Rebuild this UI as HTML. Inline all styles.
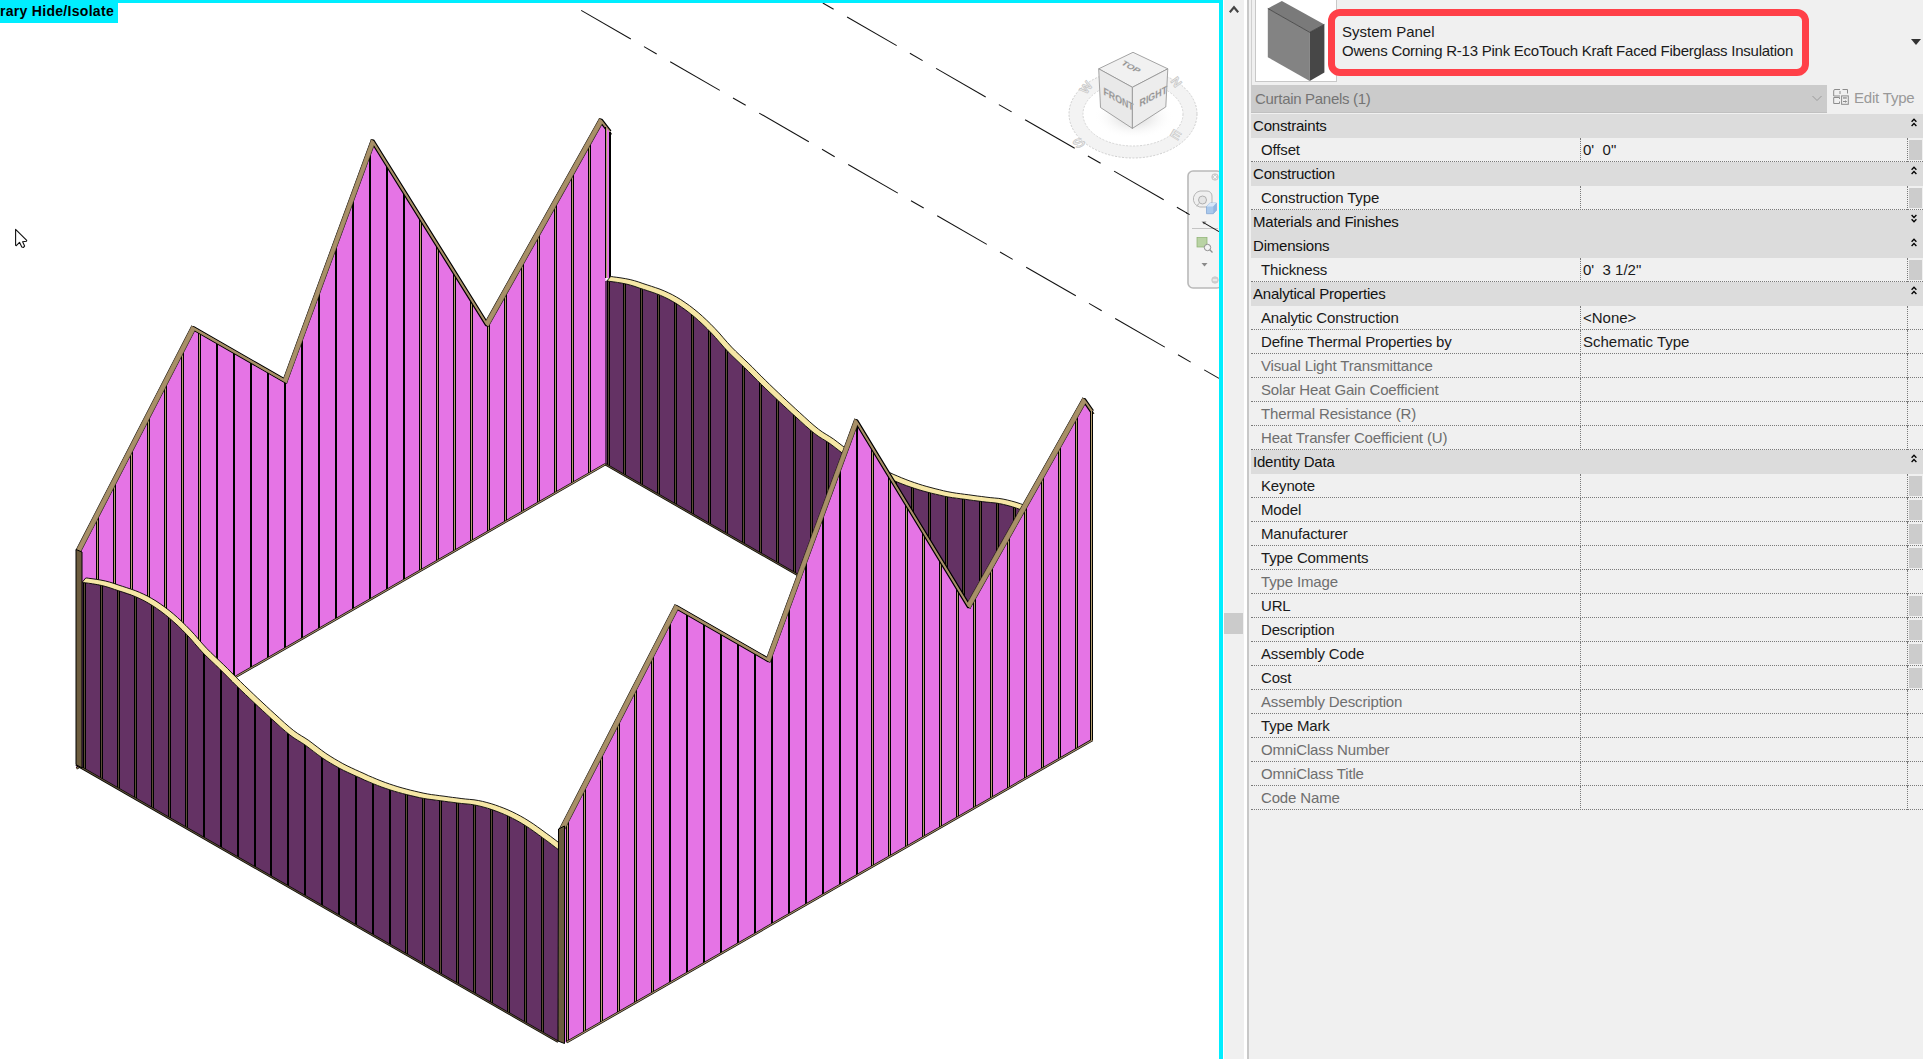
<!DOCTYPE html>
<html><head><meta charset="utf-8">
<style>
*{margin:0;padding:0;box-sizing:border-box}
html,body{width:1923px;height:1059px;overflow:hidden;background:#fff}
body{position:relative;font-family:"Liberation Sans",sans-serif}
#view{position:absolute;left:0;top:0;width:1923px;height:1059px}
#lbl{position:absolute;left:0;top:0;width:118px;height:23px;background:#00EEFF;font-weight:bold;font-size:14px;color:#000;line-height:23px;white-space:nowrap;overflow:hidden}
#lbl span{position:absolute;right:4px;top:0;letter-spacing:0.3px}
#cyt{position:absolute;left:0;top:0;width:1223px;height:3px;background:#00EEFF}
#cyr{position:absolute;left:1219px;top:0;width:4px;height:1059px;background:#00EEFF}
#strip{position:absolute;left:1224px;top:0;width:20px;height:1059px;background:#F0F0F0}
#strip .up{position:absolute;left:5px;top:5px;width:11px;height:8px}
#thumb{position:absolute;left:1224px;top:613px;width:19px;height:21px;background:#CBCBCB}
#sep{position:absolute;left:1247px;top:0;width:2px;height:1059px;background:#C8C8C8}
#panel{position:absolute;left:1249px;top:0;width:674px;height:1059px;background:#F0F0F0}
#tbox{position:absolute;left:1255px;top:-1px;width:82px;height:83px;background:#fff;border:1px solid #C8C8C8}
#redbox{position:absolute;left:1328px;top:9px;width:481px;height:67px;border:7px solid #FF4048;border-radius:12px;background:#F0F0F0}
.tt{position:absolute;left:1342px;font-size:15px;color:#1a1a1a;white-space:nowrap;line-height:18px}
#dd{position:absolute;left:1911px;top:39px;width:0;height:0;border-left:5px solid transparent;border-right:5px solid transparent;border-top:6px solid #333}
#cpbar{position:absolute;left:1251px;top:85px;width:576px;height:28px;background:#CBCBCB;border-bottom:1px solid #C0C0C0}
#cpbar span{position:absolute;left:4px;top:5px;font-size:15px;color:#747474;white-space:nowrap;letter-spacing:-0.3px}
#edit{position:absolute;left:1854px;top:89px;font-size:15px;color:#999999;white-space:nowrap;letter-spacing:-0.2px}
.hdr{position:absolute;left:1251px;width:672px;height:24px;background:#DCDCDC}
.hdr .ht{position:absolute;left:2px;top:3px;font-size:15px;color:#111;white-space:nowrap;letter-spacing:-0.2px}
.row{position:absolute;left:1251px;width:672px;height:24px;border-bottom:1px dotted #7a7a7a}
.row .nt,.row .gt{position:absolute;left:10px;top:2.5px;font-size:15px;white-space:nowrap;letter-spacing:-0.15px}
.row .nt{color:#1a1a1a}
.row .gt{color:#6e6e6e}
.row .vt{position:absolute;left:332px;top:2.5px;font-size:15px;white-space:pre;color:#1a1a1a}
.row::before{content:"";position:absolute;left:329px;top:0;height:24px;border-left:1px dotted #7a7a7a}
.row::after{content:"";position:absolute;left:656px;top:0;height:24px;border-left:1px dotted #7a7a7a}
.row .blk{position:absolute;left:658px;top:2px;width:13px;height:20px;background:#CCCCCC}
.chev{position:absolute;left:660px;top:4px;width:6px;height:9px}
</style></head><body>
<svg id="view" width="1923" height="1059" viewBox="0 0 1923 1059">
<defs><clipPath id="c1"><polygon points="76.4,549.9 191.7,326.3 283.6,379.0 371.4,139.7 485.3,322.4 599.5,118.7 605.5,126.0 605.5,464.3 76.4,768.4"/></clipPath><clipPath id="c2"><polygon points="605.0,281.1 606.8,281.1 607.0,281.1 607.3,281.1 608.1,281.1 609.9,281.4 613.1,281.8 617.3,282.4 622.0,283.2 626.5,284.1 630.7,285.2 635.0,286.5 639.2,288.0 643.5,289.4 647.8,290.8 652.0,292.2 656.3,293.7 660.5,295.4 664.7,297.3 668.8,299.3 672.9,301.6 677.1,304.1 681.4,307.0 685.8,310.1 690.2,313.5 694.5,317.0 698.7,320.7 702.9,324.6 707.1,328.7 711.3,333.0 715.5,337.5 719.6,342.3 723.8,347.1 727.9,351.6 732.0,355.7 736.1,359.6 740.2,363.5 744.4,367.5 748.7,371.7 753.0,376.1 757.3,380.4 761.6,384.7 765.9,388.9 770.2,393.0 774.5,397.1 778.8,401.2 783.1,405.2 787.3,409.1 791.6,413.1 796.0,417.1 800.7,421.4 805.5,425.8 810.3,430.0 814.8,433.7 818.8,436.6 822.5,438.9 826.1,441.1 829.9,443.6 834.0,446.7 838.3,450.0 842.6,453.3 846.9,456.4 851.1,459.2 855.4,461.8 859.7,464.3 863.9,466.7 868.1,468.9 872.4,470.9 876.7,472.9 880.9,474.8 885.1,476.7 889.4,478.7 893.7,480.5 897.9,482.3 902.2,484.0 906.4,485.6 910.7,487.1 914.9,488.5 919.0,489.8 923.1,491.0 927.3,492.1 931.4,493.2 935.6,494.2 939.9,495.2 944.2,496.2 948.4,497.0 952.6,497.7 956.7,498.2 960.9,498.8 965.1,499.3 969.3,499.9 973.6,500.5 977.9,501.0 982.2,501.6 986.5,502.1 990.8,502.5 995.1,502.9 999.4,503.6 1003.7,504.5 1008.0,505.6 1012.3,506.8 1016.6,508.2 1020.8,509.7 1025.0,511.3 1029.1,513.0 1033.3,514.9 1037.5,517.0 1041.7,519.2 1045.9,521.6 1050.1,524.2 1054.4,527.0 1058.8,530.1 1063.1,533.2 1067.3,536.3 1071.7,539.5 1076.2,542.9 1080.1,545.9 1082.9,548.0 1082.9,738.9 605.0,464.3"/></clipPath><clipPath id="c3"><polygon points="82.0,582.5 82.2,582.5 82.5,582.5 83.3,582.5 85.1,582.8 88.3,583.2 92.5,583.8 97.2,584.6 101.7,585.5 105.9,586.6 110.2,587.9 114.4,589.4 118.7,590.8 123.0,592.2 127.2,593.6 131.5,595.1 135.7,596.8 139.9,598.7 144.0,600.7 148.1,603.0 152.3,605.5 156.6,608.4 161.0,611.5 165.4,614.9 169.7,618.4 173.9,622.1 178.2,626.0 182.3,630.1 186.5,634.4 190.7,638.9 194.8,643.7 199.0,648.5 203.1,653.0 207.2,657.1 211.3,661.0 215.4,664.9 219.6,668.9 223.9,673.1 228.2,677.5 232.5,681.8 236.8,686.1 241.1,690.3 245.4,694.4 249.7,698.5 254.0,702.6 258.3,706.6 262.5,710.5 266.8,714.5 271.2,718.5 275.9,722.8 280.7,727.2 285.5,731.4 290.0,735.1 294.0,738.0 297.7,740.3 301.3,742.5 305.1,745.0 309.2,748.1 313.5,751.4 317.8,754.7 322.1,757.8 326.4,760.6 330.6,763.2 334.9,765.7 339.1,768.1 343.4,770.3 347.6,772.3 351.9,774.3 356.1,776.2 360.4,778.1 364.6,780.1 368.9,781.9 373.1,783.7 377.4,785.4 381.6,787.0 385.9,788.5 390.1,789.9 394.2,791.2 398.4,792.4 402.5,793.5 406.6,794.6 410.8,795.6 415.1,796.6 419.4,797.6 423.6,798.4 427.8,799.1 431.9,799.6 436.1,800.2 440.3,800.7 444.5,801.3 448.8,801.9 453.1,802.4 457.4,803.0 461.7,803.5 466.0,803.9 470.3,804.3 474.6,805.0 478.9,805.9 483.2,807.0 487.5,808.2 491.8,809.6 496.0,811.1 500.2,812.7 504.3,814.4 508.5,816.3 512.7,818.4 516.9,820.6 521.1,823.0 525.3,825.6 529.6,828.4 534.0,831.5 538.3,834.6 542.5,837.7 546.9,840.9 551.4,844.3 555.3,847.3 558.1,849.4 558.1,1041.8 82.0,768.0"/></clipPath><clipPath id="c4"><polygon points="564.5,824.0 674.9,605.1 766.9,658.0 854.8,419.3 967.1,604.0 1082.8,398.3 1092.6,411.7 1092.6,739.9 566.6,1042.3 564.5,1042.3"/></clipPath>
<radialGradient id="shad" cx="0.5" cy="0.5" r="0.5"><stop offset="0" stop-color="#cacaca"/><stop offset="1" stop-color="#fff" stop-opacity="0"/></radialGradient>
</defs>
<polygon points="76.4,549.9 191.7,326.3 283.6,379.0 371.4,139.7 485.3,322.4 599.5,118.7 605.5,126.0 605.5,464.3 76.4,768.4" fill="#E574E5"/><g clip-path="url(#c1)"><rect x="96" y="100" width="3" height="680" fill="#000"/><rect x="97" y="100" width="1" height="680" fill="#B8A070"/><rect x="113" y="100" width="3" height="680" fill="#000"/><rect x="114" y="100" width="1" height="680" fill="#B8A070"/><rect x="130" y="100" width="3" height="680" fill="#000"/><rect x="131" y="100" width="1" height="680" fill="#B8A070"/><rect x="147" y="100" width="3" height="680" fill="#000"/><rect x="148" y="100" width="1" height="680" fill="#B8A070"/><rect x="164" y="100" width="3" height="680" fill="#000"/><rect x="165" y="100" width="1" height="680" fill="#B8A070"/><rect x="181" y="100" width="3" height="680" fill="#000"/><rect x="182" y="100" width="1" height="680" fill="#B8A070"/><rect x="198" y="100" width="3" height="680" fill="#000"/><rect x="199" y="100" width="1" height="680" fill="#B8A070"/><rect x="216" y="100" width="2" height="680" fill="#000"/><rect x="233" y="100" width="2" height="680" fill="#000"/><rect x="250" y="100" width="2" height="680" fill="#000"/><rect x="267" y="100" width="2" height="680" fill="#000"/><rect x="284" y="100" width="2" height="680" fill="#000"/><rect x="301" y="100" width="2" height="680" fill="#000"/><rect x="318" y="100" width="2" height="680" fill="#000"/><rect x="335" y="100" width="2" height="680" fill="#000"/><rect x="352" y="100" width="2" height="680" fill="#000"/><rect x="369" y="100" width="2" height="680" fill="#000"/><rect x="386" y="100" width="2" height="680" fill="#000"/><rect x="403" y="100" width="2" height="680" fill="#000"/><rect x="419" y="100" width="3" height="680" fill="#000"/><rect x="420" y="100" width="1" height="680" fill="#B8A070"/><rect x="436" y="100" width="3" height="680" fill="#000"/><rect x="437" y="100" width="1" height="680" fill="#B8A070"/><rect x="453" y="100" width="3" height="680" fill="#000"/><rect x="454" y="100" width="1" height="680" fill="#B8A070"/><rect x="470" y="100" width="3" height="680" fill="#000"/><rect x="471" y="100" width="1" height="680" fill="#B8A070"/><rect x="487" y="100" width="3" height="680" fill="#000"/><rect x="488" y="100" width="1" height="680" fill="#B8A070"/><rect x="504" y="100" width="3" height="680" fill="#000"/><rect x="505" y="100" width="1" height="680" fill="#B8A070"/><rect x="521" y="100" width="3" height="680" fill="#000"/><rect x="522" y="100" width="1" height="680" fill="#B8A070"/><rect x="537" y="100" width="3" height="680" fill="#000"/><rect x="538" y="100" width="1" height="680" fill="#B8A070"/><rect x="554" y="100" width="3" height="680" fill="#000"/><rect x="555" y="100" width="1" height="680" fill="#B8A070"/><rect x="571" y="100" width="3" height="680" fill="#000"/><rect x="572" y="100" width="1" height="680" fill="#B8A070"/><rect x="588" y="100" width="3" height="680" fill="#000"/><rect x="589" y="100" width="1" height="680" fill="#B8A070"/></g><line x1="605.3" y1="464.3" x2="76.4" y2="768.4" stroke="#000" stroke-width="2.4"/><line x1="605.3" y1="464.3" x2="76.4" y2="768.4" stroke="#A89068" stroke-width="1.1"/><polygon points="76.4,549.9 191.7,326.3 194.7,330.2 79.4,553.8" fill="#000" stroke="#000" stroke-width="1.3" stroke-linejoin="round"/><polygon points="191.7,326.3 283.6,379.0 286.6,382.9 194.7,330.2" fill="#000" stroke="#000" stroke-width="1.3" stroke-linejoin="round"/><polygon points="283.6,379.0 371.4,139.7 374.4,143.6 286.6,382.9" fill="#000" stroke="#000" stroke-width="1.3" stroke-linejoin="round"/><polygon points="371.4,139.7 485.3,322.4 488.3,326.3 374.4,143.6" fill="#000" stroke="#000" stroke-width="1.3" stroke-linejoin="round"/><polygon points="485.3,322.4 599.5,118.7 602.5,122.6 488.3,326.3" fill="#000" stroke="#000" stroke-width="1.3" stroke-linejoin="round"/><polygon points="599.5,118.7 608.2,130.0 611.2,133.9 602.5,122.6" fill="#000" stroke="#000" stroke-width="1.3" stroke-linejoin="round"/><polyline points="77.9,551.9 193.2,328.2 285.1,380.9 372.9,141.6 486.8,324.3 601.0,120.7 609.7,131.9" fill="none" stroke="#000" stroke-width="4.4" stroke-linejoin="round"/><polygon points="76.4,549.9 191.7,326.3 194.7,330.2 79.4,553.8" fill="#A89068" stroke="#A89068" stroke-width="0.5"/><polygon points="191.7,326.3 283.6,379.0 286.6,382.9 194.7,330.2" fill="#A89068" stroke="#A89068" stroke-width="0.5"/><polygon points="283.6,379.0 371.4,139.7 374.4,143.6 286.6,382.9" fill="#A89068" stroke="#A89068" stroke-width="0.5"/><polygon points="371.4,139.7 485.3,322.4 488.3,326.3 374.4,143.6" fill="#A89068" stroke="#A89068" stroke-width="0.5"/><polygon points="485.3,322.4 599.5,118.7 602.5,122.6 488.3,326.3" fill="#A89068" stroke="#A89068" stroke-width="0.5"/><polygon points="599.5,118.7 608.2,130.0 611.2,133.9 602.5,122.6" fill="#A89068" stroke="#A89068" stroke-width="0.5"/><polyline points="77.9,551.9 193.2,328.2 285.1,380.9 372.9,141.6 486.8,324.3 601.0,120.7 609.7,131.9" fill="none" stroke="#A89068" stroke-width="2.0" stroke-linejoin="round"/><polygon points="605,126 610,132.5 611,133 611,278 605,278" fill="#E574E5"/><rect x="605" y="127" width="1" height="151" fill="#000"/><rect x="606" y="128" width="1" height="150" fill="#B8A070"/><rect x="609" y="132" width="2" height="146" fill="#000"/><polygon points="605.0,281.1 606.8,281.1 607.0,281.1 607.3,281.1 608.1,281.1 609.9,281.4 613.1,281.8 617.3,282.4 622.0,283.2 626.5,284.1 630.7,285.2 635.0,286.5 639.2,288.0 643.5,289.4 647.8,290.8 652.0,292.2 656.3,293.7 660.5,295.4 664.7,297.3 668.8,299.3 672.9,301.6 677.1,304.1 681.4,307.0 685.8,310.1 690.2,313.5 694.5,317.0 698.7,320.7 702.9,324.6 707.1,328.7 711.3,333.0 715.5,337.5 719.6,342.3 723.8,347.1 727.9,351.6 732.0,355.7 736.1,359.6 740.2,363.5 744.4,367.5 748.7,371.7 753.0,376.1 757.3,380.4 761.6,384.7 765.9,388.9 770.2,393.0 774.5,397.1 778.8,401.2 783.1,405.2 787.3,409.1 791.6,413.1 796.0,417.1 800.7,421.4 805.5,425.8 810.3,430.0 814.8,433.7 818.8,436.6 822.5,438.9 826.1,441.1 829.9,443.6 834.0,446.7 838.3,450.0 842.6,453.3 846.9,456.4 851.1,459.2 855.4,461.8 859.7,464.3 863.9,466.7 868.1,468.9 872.4,470.9 876.7,472.9 880.9,474.8 885.1,476.7 889.4,478.7 893.7,480.5 897.9,482.3 902.2,484.0 906.4,485.6 910.7,487.1 914.9,488.5 919.0,489.8 923.1,491.0 927.3,492.1 931.4,493.2 935.6,494.2 939.9,495.2 944.2,496.2 948.4,497.0 952.6,497.7 956.7,498.2 960.9,498.8 965.1,499.3 969.3,499.9 973.6,500.5 977.9,501.0 982.2,501.6 986.5,502.1 990.8,502.5 995.1,502.9 999.4,503.6 1003.7,504.5 1008.0,505.6 1012.3,506.8 1016.6,508.2 1020.8,509.7 1025.0,511.3 1029.1,513.0 1033.3,514.9 1037.5,517.0 1041.7,519.2 1045.9,521.6 1050.1,524.2 1054.4,527.0 1058.8,530.1 1063.1,533.2 1067.3,536.3 1071.7,539.5 1076.2,542.9 1080.1,545.9 1082.9,548.0 1082.9,738.9 605.0,464.3" fill="#643264"/><g clip-path="url(#c2)"><rect x="607" y="250" width="3" height="510" fill="#000"/><rect x="608" y="250" width="1" height="510" fill="#5A4C34"/><rect x="623" y="250" width="3" height="510" fill="#000"/><rect x="624" y="250" width="1" height="510" fill="#5A4C34"/><rect x="640" y="250" width="3" height="510" fill="#000"/><rect x="641" y="250" width="1" height="510" fill="#5A4C34"/><rect x="657" y="250" width="3" height="510" fill="#000"/><rect x="658" y="250" width="1" height="510" fill="#5A4C34"/><rect x="674" y="250" width="3" height="510" fill="#000"/><rect x="675" y="250" width="1" height="510" fill="#5A4C34"/><rect x="691" y="250" width="3" height="510" fill="#000"/><rect x="692" y="250" width="1" height="510" fill="#5A4C34"/><rect x="708" y="250" width="3" height="510" fill="#000"/><rect x="709" y="250" width="1" height="510" fill="#5A4C34"/><rect x="725" y="250" width="3" height="510" fill="#000"/><rect x="726" y="250" width="1" height="510" fill="#5A4C34"/><rect x="742" y="250" width="3" height="510" fill="#000"/><rect x="743" y="250" width="1" height="510" fill="#5A4C34"/><rect x="759" y="250" width="3" height="510" fill="#000"/><rect x="760" y="250" width="1" height="510" fill="#5A4C34"/><rect x="776" y="250" width="3" height="510" fill="#000"/><rect x="777" y="250" width="1" height="510" fill="#5A4C34"/><rect x="793" y="250" width="3" height="510" fill="#000"/><rect x="794" y="250" width="1" height="510" fill="#5A4C34"/><rect x="810" y="250" width="3" height="510" fill="#000"/><rect x="811" y="250" width="1" height="510" fill="#5A4C34"/><rect x="826" y="250" width="3" height="510" fill="#000"/><rect x="827" y="250" width="1" height="510" fill="#5A4C34"/><rect x="843" y="250" width="3" height="510" fill="#000"/><rect x="844" y="250" width="1" height="510" fill="#5A4C34"/><rect x="860" y="250" width="3" height="510" fill="#000"/><rect x="861" y="250" width="1" height="510" fill="#5A4C34"/><rect x="877" y="250" width="3" height="510" fill="#000"/><rect x="878" y="250" width="1" height="510" fill="#5A4C34"/><rect x="894" y="250" width="3" height="510" fill="#000"/><rect x="895" y="250" width="1" height="510" fill="#5A4C34"/><rect x="911" y="250" width="3" height="510" fill="#000"/><rect x="912" y="250" width="1" height="510" fill="#5A4C34"/><rect x="928" y="250" width="3" height="510" fill="#000"/><rect x="929" y="250" width="1" height="510" fill="#5A4C34"/><rect x="945" y="250" width="3" height="510" fill="#000"/><rect x="946" y="250" width="1" height="510" fill="#5A4C34"/><rect x="962" y="250" width="3" height="510" fill="#000"/><rect x="963" y="250" width="1" height="510" fill="#5A4C34"/><rect x="979" y="250" width="3" height="510" fill="#000"/><rect x="980" y="250" width="1" height="510" fill="#5A4C34"/><rect x="996" y="250" width="3" height="510" fill="#000"/><rect x="997" y="250" width="1" height="510" fill="#5A4C34"/><rect x="1013" y="250" width="3" height="510" fill="#000"/><rect x="1014" y="250" width="1" height="510" fill="#5A4C34"/><rect x="1029" y="250" width="3" height="510" fill="#000"/><rect x="1030" y="250" width="1" height="510" fill="#5A4C34"/><rect x="1046" y="250" width="3" height="510" fill="#000"/><rect x="1047" y="250" width="1" height="510" fill="#5A4C34"/><rect x="1063" y="250" width="3" height="510" fill="#000"/><rect x="1064" y="250" width="1" height="510" fill="#5A4C34"/><rect x="1080" y="250" width="3" height="510" fill="#000"/><rect x="1081" y="250" width="1" height="510" fill="#5A4C34"/></g><line x1="605.3" y1="464.3" x2="1082.9" y2="738.9" stroke="#000" stroke-width="2.4"/><line x1="605.3" y1="464.3" x2="1082.9" y2="738.9" stroke="#5A4C34" stroke-width="1.1"/><polygon points="606.8,281.1 607.0,281.1 607.3,281.1 608.1,281.1 609.9,281.4 613.1,281.8 617.3,282.4 622.0,283.2 626.5,284.1 630.7,285.2 635.0,286.5 639.2,288.0 643.5,289.4 647.8,290.8 652.0,292.2 656.3,293.7 660.5,295.4 664.7,297.3 668.8,299.3 672.9,301.6 677.1,304.1 681.4,307.0 685.8,310.1 690.2,313.5 694.5,317.0 698.7,320.7 702.9,324.6 707.1,328.7 711.3,333.0 715.5,337.5 719.6,342.3 723.8,347.1 727.9,351.6 732.0,355.7 736.1,359.6 740.2,363.5 744.4,367.5 748.7,371.7 753.0,376.1 757.3,380.4 761.6,384.7 765.9,388.9 770.2,393.0 774.5,397.1 778.8,401.2 783.1,405.2 787.3,409.1 791.6,413.1 796.0,417.1 800.7,421.4 805.5,425.8 810.3,430.0 814.8,433.7 818.8,436.6 822.5,438.9 826.1,441.1 829.9,443.6 834.0,446.7 838.3,450.0 842.6,453.3 846.9,456.4 851.1,459.2 855.4,461.8 859.7,464.3 863.9,466.7 868.1,468.9 872.4,470.9 876.7,472.9 880.9,474.8 885.1,476.7 889.4,478.7 893.7,480.5 897.9,482.3 902.2,484.0 906.4,485.6 910.7,487.1 914.9,488.5 919.0,489.8 923.1,491.0 927.3,492.1 931.4,493.2 935.6,494.2 939.9,495.2 944.2,496.2 948.4,497.0 952.6,497.7 956.7,498.2 960.9,498.8 965.1,499.3 969.3,499.9 973.6,500.5 977.9,501.0 982.2,501.6 986.5,502.1 990.8,502.5 995.1,502.9 999.4,503.6 1003.7,504.5 1008.0,505.6 1012.3,506.8 1016.6,508.2 1020.8,509.7 1025.0,511.3 1029.1,513.0 1033.3,514.9 1037.5,517.0 1041.7,519.2 1045.9,521.6 1050.1,524.2 1054.4,527.0 1058.8,530.1 1063.1,533.2 1067.3,536.3 1071.7,539.5 1076.2,542.9 1080.1,545.9 1082.9,548.0 1086.6,543.5 1083.8,541.4 1079.9,538.4 1075.4,535.0 1071.0,531.8 1066.8,528.7 1062.5,525.6 1058.1,522.5 1053.8,519.7 1049.6,517.1 1045.4,514.7 1041.2,512.5 1037.0,510.4 1032.8,508.5 1028.7,506.8 1024.5,505.2 1020.3,503.7 1016.0,502.3 1011.7,501.1 1007.4,500.0 1003.1,499.1 998.8,498.4 994.5,498.0 990.2,497.6 985.9,497.1 981.6,496.5 977.3,496.0 973.0,495.4 968.8,494.8 964.6,494.3 960.4,493.7 956.3,493.2 952.1,492.5 947.9,491.7 943.6,490.8 939.3,489.7 935.1,488.7 931.0,487.6 926.9,486.5 922.7,485.3 918.6,484.0 914.4,482.6 910.1,481.1 905.9,479.5 901.6,477.8 897.4,476.0 893.1,474.2 888.9,472.2 884.6,470.3 880.4,468.4 876.1,466.4 871.9,464.4 867.6,462.2 863.4,459.8 859.1,457.3 854.9,454.7 850.6,451.9 846.3,448.8 842.0,445.5 837.7,442.2 833.6,439.1 829.8,436.6 826.2,434.4 822.5,432.1 818.5,429.2 814.0,425.5 809.2,421.3 804.4,416.9 799.7,412.6 795.3,408.6 791.0,404.6 786.8,400.7 782.5,396.7 778.2,392.6 773.9,388.5 769.6,384.4 765.3,380.2 761.0,375.9 756.7,371.6 752.4,367.2 748.1,363.0 743.9,359.0 739.8,355.1 735.7,351.2 731.6,347.1 727.5,342.6 723.3,337.8 719.2,333.0 715.0,328.5 710.8,324.2 706.6,320.1 702.4,316.2 698.2,312.5 693.9,309.0 689.5,305.6 685.1,302.5 680.8,299.6 676.6,297.1 672.5,294.8 668.4,292.8 664.2,290.9 660.0,289.2 655.7,287.7 651.5,286.3 647.2,284.9 642.9,283.5 638.7,282.0 634.4,280.7 630.2,279.6 625.7,278.7 621.0,277.9 616.8,277.3 613.6,276.9 611.8,276.6 611.0,276.6 610.7,276.6 610.5,276.6" fill="#F6E7A6" stroke="#000" stroke-width="0.9" stroke-linejoin="round"/><polygon points="82.0,582.5 82.2,582.5 82.5,582.5 83.3,582.5 85.1,582.8 88.3,583.2 92.5,583.8 97.2,584.6 101.7,585.5 105.9,586.6 110.2,587.9 114.4,589.4 118.7,590.8 123.0,592.2 127.2,593.6 131.5,595.1 135.7,596.8 139.9,598.7 144.0,600.7 148.1,603.0 152.3,605.5 156.6,608.4 161.0,611.5 165.4,614.9 169.7,618.4 173.9,622.1 178.2,626.0 182.3,630.1 186.5,634.4 190.7,638.9 194.8,643.7 199.0,648.5 203.1,653.0 207.2,657.1 211.3,661.0 215.4,664.9 219.6,668.9 223.9,673.1 228.2,677.5 232.5,681.8 236.8,686.1 241.1,690.3 245.4,694.4 249.7,698.5 254.0,702.6 258.3,706.6 262.5,710.5 266.8,714.5 271.2,718.5 275.9,722.8 280.7,727.2 285.5,731.4 290.0,735.1 294.0,738.0 297.7,740.3 301.3,742.5 305.1,745.0 309.2,748.1 313.5,751.4 317.8,754.7 322.1,757.8 326.4,760.6 330.6,763.2 334.9,765.7 339.1,768.1 343.4,770.3 347.6,772.3 351.9,774.3 356.1,776.2 360.4,778.1 364.6,780.1 368.9,781.9 373.1,783.7 377.4,785.4 381.6,787.0 385.9,788.5 390.1,789.9 394.2,791.2 398.4,792.4 402.5,793.5 406.6,794.6 410.8,795.6 415.1,796.6 419.4,797.6 423.6,798.4 427.8,799.1 431.9,799.6 436.1,800.2 440.3,800.7 444.5,801.3 448.8,801.9 453.1,802.4 457.4,803.0 461.7,803.5 466.0,803.9 470.3,804.3 474.6,805.0 478.9,805.9 483.2,807.0 487.5,808.2 491.8,809.6 496.0,811.1 500.2,812.7 504.3,814.4 508.5,816.3 512.7,818.4 516.9,820.6 521.1,823.0 525.3,825.6 529.6,828.4 534.0,831.5 538.3,834.6 542.5,837.7 546.9,840.9 551.4,844.3 555.3,847.3 558.1,849.4 558.1,1041.8 82.0,768.0" fill="#643264"/><g clip-path="url(#c3)"><rect x="83" y="560" width="3" height="490" fill="#000"/><rect x="84" y="560" width="1" height="490" fill="#5A4C34"/><rect x="100" y="560" width="3" height="490" fill="#000"/><rect x="101" y="560" width="1" height="490" fill="#5A4C34"/><rect x="117" y="560" width="3" height="490" fill="#000"/><rect x="118" y="560" width="1" height="490" fill="#5A4C34"/><rect x="134" y="560" width="3" height="490" fill="#000"/><rect x="135" y="560" width="1" height="490" fill="#5A4C34"/><rect x="151" y="560" width="3" height="490" fill="#000"/><rect x="152" y="560" width="1" height="490" fill="#5A4C34"/><rect x="168" y="560" width="3" height="490" fill="#000"/><rect x="169" y="560" width="1" height="490" fill="#5A4C34"/><rect x="185" y="560" width="3" height="490" fill="#000"/><rect x="186" y="560" width="1" height="490" fill="#5A4C34"/><rect x="203" y="560" width="2" height="490" fill="#000"/><rect x="220" y="560" width="2" height="490" fill="#000"/><rect x="237" y="560" width="2" height="490" fill="#000"/><rect x="254" y="560" width="2" height="490" fill="#000"/><rect x="270" y="560" width="2" height="490" fill="#000"/><rect x="287" y="560" width="2" height="490" fill="#000"/><rect x="304" y="560" width="2" height="490" fill="#000"/><rect x="321" y="560" width="2" height="490" fill="#000"/><rect x="338" y="560" width="2" height="490" fill="#000"/><rect x="355" y="560" width="2" height="490" fill="#000"/><rect x="372" y="560" width="2" height="490" fill="#000"/><rect x="389" y="560" width="2" height="490" fill="#000"/><rect x="405" y="560" width="3" height="490" fill="#000"/><rect x="406" y="560" width="1" height="490" fill="#5A4C34"/><rect x="422" y="560" width="3" height="490" fill="#000"/><rect x="423" y="560" width="1" height="490" fill="#5A4C34"/><rect x="439" y="560" width="3" height="490" fill="#000"/><rect x="440" y="560" width="1" height="490" fill="#5A4C34"/><rect x="456" y="560" width="3" height="490" fill="#000"/><rect x="457" y="560" width="1" height="490" fill="#5A4C34"/><rect x="473" y="560" width="3" height="490" fill="#000"/><rect x="474" y="560" width="1" height="490" fill="#5A4C34"/><rect x="490" y="560" width="3" height="490" fill="#000"/><rect x="491" y="560" width="1" height="490" fill="#5A4C34"/><rect x="507" y="560" width="3" height="490" fill="#000"/><rect x="508" y="560" width="1" height="490" fill="#5A4C34"/><rect x="524" y="560" width="3" height="490" fill="#000"/><rect x="525" y="560" width="1" height="490" fill="#5A4C34"/><rect x="541" y="560" width="3" height="490" fill="#000"/><rect x="542" y="560" width="1" height="490" fill="#5A4C34"/></g><line x1="76.1" y1="764.6" x2="558.1" y2="1041.8" stroke="#000" stroke-width="2.4"/><line x1="76.1" y1="764.6" x2="558.1" y2="1041.8" stroke="#5A4C34" stroke-width="1.1"/><polygon points="82.0,582.5 82.2,582.5 82.5,582.5 83.3,582.5 85.1,582.8 88.3,583.2 92.5,583.8 97.2,584.6 101.7,585.5 105.9,586.6 110.2,587.9 114.4,589.4 118.7,590.8 123.0,592.2 127.2,593.6 131.5,595.1 135.7,596.8 139.9,598.7 144.0,600.7 148.1,603.0 152.3,605.5 156.6,608.4 161.0,611.5 165.4,614.9 169.7,618.4 173.9,622.1 178.2,626.0 182.3,630.1 186.5,634.4 190.7,638.9 194.8,643.7 199.0,648.5 203.1,653.0 207.2,657.1 211.3,661.0 215.4,664.9 219.6,668.9 223.9,673.1 228.2,677.5 232.5,681.8 236.8,686.1 241.1,690.3 245.4,694.4 249.7,698.5 254.0,702.6 258.3,706.6 262.5,710.5 266.8,714.5 271.2,718.5 275.9,722.8 280.7,727.2 285.5,731.4 290.0,735.1 294.0,738.0 297.7,740.3 301.3,742.5 305.1,745.0 309.2,748.1 313.5,751.4 317.8,754.7 322.1,757.8 326.4,760.6 330.6,763.2 334.9,765.7 339.1,768.1 343.4,770.3 347.6,772.3 351.9,774.3 356.1,776.2 360.4,778.1 364.6,780.1 368.9,781.9 373.1,783.7 377.4,785.4 381.6,787.0 385.9,788.5 390.1,789.9 394.2,791.2 398.4,792.4 402.5,793.5 406.6,794.6 410.8,795.6 415.1,796.6 419.4,797.6 423.6,798.4 427.8,799.1 431.9,799.6 436.1,800.2 440.3,800.7 444.5,801.3 448.8,801.9 453.1,802.4 457.4,803.0 461.7,803.5 466.0,803.9 470.3,804.3 474.6,805.0 478.9,805.9 483.2,807.0 487.5,808.2 491.8,809.6 496.0,811.1 500.2,812.7 504.3,814.4 508.5,816.3 512.7,818.4 516.9,820.6 521.1,823.0 525.3,825.6 529.6,828.4 534.0,831.5 538.3,834.6 542.5,837.7 546.9,840.9 551.4,844.3 555.3,847.3 558.1,849.4 561.8,844.9 559.0,842.8 555.1,839.8 550.6,836.4 546.2,833.2 542.0,830.1 537.7,827.0 533.3,823.9 529.0,821.1 524.8,818.5 520.6,816.1 516.4,813.9 512.2,811.8 508.0,809.9 503.9,808.2 499.7,806.6 495.5,805.1 491.2,803.7 486.9,802.5 482.6,801.4 478.3,800.5 474.0,799.8 469.7,799.4 465.4,799.0 461.1,798.5 456.8,797.9 452.5,797.4 448.2,796.8 444.0,796.2 439.8,795.7 435.6,795.1 431.5,794.6 427.3,793.9 423.1,793.1 418.8,792.1 414.5,791.1 410.3,790.1 406.2,789.0 402.1,787.9 397.9,786.7 393.8,785.4 389.6,784.0 385.3,782.5 381.1,780.9 376.8,779.2 372.6,777.4 368.3,775.6 364.1,773.6 359.8,771.7 355.6,769.8 351.3,767.8 347.1,765.8 342.8,763.6 338.6,761.2 334.3,758.7 330.1,756.1 325.8,753.3 321.5,750.2 317.2,746.9 312.9,743.6 308.8,740.5 305.0,738.0 301.4,735.8 297.7,733.5 293.7,730.6 289.2,726.9 284.4,722.7 279.6,718.3 274.9,714.0 270.5,710.0 266.2,706.0 262.0,702.1 257.7,698.1 253.4,694.0 249.1,689.9 244.8,685.8 240.5,681.6 236.2,677.3 231.9,673.0 227.6,668.6 223.3,664.4 219.1,660.4 215.0,656.5 210.9,652.6 206.8,648.5 202.7,644.0 198.5,639.2 194.4,634.4 190.2,629.9 186.0,625.6 181.8,621.5 177.6,617.6 173.4,613.9 169.1,610.4 164.7,607.0 160.3,603.9 156.0,601.0 151.8,598.5 147.7,596.2 143.6,594.2 139.4,592.3 135.2,590.6 130.9,589.1 126.7,587.7 122.4,586.3 118.1,584.9 113.9,583.4 109.6,582.1 105.4,581.0 100.9,580.1 96.2,579.3 92.0,578.7 88.8,578.3 87.0,578.0 86.2,578.0 85.9,578.0 85.7,578.0" fill="#F6E7A6" stroke="#000" stroke-width="0.9" stroke-linejoin="round"/><polygon points="76,549.5 82,552 82,768 76,764.6" fill="#6C5C3E" stroke="#000" stroke-width="1"/><polygon points="564.5,824.0 674.9,605.1 766.9,658.0 854.8,419.3 967.1,604.0 1082.8,398.3 1092.6,411.7 1092.6,739.9 566.6,1042.3 564.5,1042.3" fill="#E574E5"/><g clip-path="url(#c4)"><rect x="566" y="380" width="3" height="670" fill="#000"/><rect x="567" y="380" width="1" height="670" fill="#B8A070"/><rect x="583" y="380" width="3" height="670" fill="#000"/><rect x="584" y="380" width="1" height="670" fill="#B8A070"/><rect x="600" y="380" width="3" height="670" fill="#000"/><rect x="601" y="380" width="1" height="670" fill="#B8A070"/><rect x="617" y="380" width="3" height="670" fill="#000"/><rect x="618" y="380" width="1" height="670" fill="#B8A070"/><rect x="634" y="380" width="3" height="670" fill="#000"/><rect x="635" y="380" width="1" height="670" fill="#B8A070"/><rect x="651" y="380" width="3" height="670" fill="#000"/><rect x="652" y="380" width="1" height="670" fill="#B8A070"/><rect x="669" y="380" width="2" height="670" fill="#000"/><rect x="686" y="380" width="2" height="670" fill="#000"/><rect x="703" y="380" width="2" height="670" fill="#000"/><rect x="720" y="380" width="2" height="670" fill="#000"/><rect x="737" y="380" width="2" height="670" fill="#000"/><rect x="754" y="380" width="2" height="670" fill="#000"/><rect x="771" y="380" width="2" height="670" fill="#000"/><rect x="788" y="380" width="2" height="670" fill="#000"/><rect x="805" y="380" width="2" height="670" fill="#000"/><rect x="822" y="380" width="2" height="670" fill="#000"/><rect x="839" y="380" width="2" height="670" fill="#000"/><rect x="856" y="380" width="2" height="670" fill="#000"/><rect x="871" y="380" width="3" height="670" fill="#000"/><rect x="872" y="380" width="1" height="670" fill="#B8A070"/><rect x="888" y="380" width="3" height="670" fill="#000"/><rect x="889" y="380" width="1" height="670" fill="#B8A070"/><rect x="905" y="380" width="3" height="670" fill="#000"/><rect x="906" y="380" width="1" height="670" fill="#B8A070"/><rect x="922" y="380" width="3" height="670" fill="#000"/><rect x="923" y="380" width="1" height="670" fill="#B8A070"/><rect x="939" y="380" width="3" height="670" fill="#000"/><rect x="940" y="380" width="1" height="670" fill="#B8A070"/><rect x="956" y="380" width="3" height="670" fill="#000"/><rect x="957" y="380" width="1" height="670" fill="#B8A070"/><rect x="973" y="380" width="3" height="670" fill="#000"/><rect x="974" y="380" width="1" height="670" fill="#B8A070"/><rect x="990" y="380" width="3" height="670" fill="#000"/><rect x="991" y="380" width="1" height="670" fill="#B8A070"/><rect x="1007" y="380" width="3" height="670" fill="#000"/><rect x="1008" y="380" width="1" height="670" fill="#B8A070"/><rect x="1024" y="380" width="3" height="670" fill="#000"/><rect x="1025" y="380" width="1" height="670" fill="#B8A070"/><rect x="1041" y="380" width="3" height="670" fill="#000"/><rect x="1042" y="380" width="1" height="670" fill="#B8A070"/><rect x="1058" y="380" width="3" height="670" fill="#000"/><rect x="1059" y="380" width="1" height="670" fill="#B8A070"/><rect x="1075" y="380" width="3" height="670" fill="#000"/><rect x="1076" y="380" width="1" height="670" fill="#B8A070"/></g><line x1="566.6" y1="1042.3" x2="1092.6" y2="739.9" stroke="#000" stroke-width="2.4"/><line x1="566.6" y1="1042.3" x2="1092.6" y2="739.9" stroke="#A89068" stroke-width="1.1"/><polygon points="559.8,828.6 674.9,605.1 677.9,609.0 562.8,832.5" fill="#000" stroke="#000" stroke-width="1.3" stroke-linejoin="round"/><polygon points="674.9,605.1 766.9,658.0 769.9,661.9 677.9,609.0" fill="#000" stroke="#000" stroke-width="1.3" stroke-linejoin="round"/><polygon points="766.9,658.0 854.8,419.3 857.8,423.2 769.9,661.9" fill="#000" stroke="#000" stroke-width="1.3" stroke-linejoin="round"/><polygon points="854.8,419.3 967.1,604.0 970.1,607.9 857.8,423.2" fill="#000" stroke="#000" stroke-width="1.3" stroke-linejoin="round"/><polygon points="967.1,604.0 1082.8,398.3 1085.8,402.2 970.1,607.9" fill="#000" stroke="#000" stroke-width="1.3" stroke-linejoin="round"/><polygon points="1082.8,398.3 1090.6,409.5 1093.6,413.4 1085.8,402.2" fill="#000" stroke="#000" stroke-width="1.3" stroke-linejoin="round"/><polyline points="561.3,830.6 676.4,607.1 768.4,660.0 856.3,421.2 968.6,606.0 1084.3,400.2 1092.1,411.4" fill="none" stroke="#000" stroke-width="4.4" stroke-linejoin="round"/><polygon points="559.8,828.6 674.9,605.1 677.9,609.0 562.8,832.5" fill="#A89068" stroke="#A89068" stroke-width="0.5"/><polygon points="674.9,605.1 766.9,658.0 769.9,661.9 677.9,609.0" fill="#A89068" stroke="#A89068" stroke-width="0.5"/><polygon points="766.9,658.0 854.8,419.3 857.8,423.2 769.9,661.9" fill="#A89068" stroke="#A89068" stroke-width="0.5"/><polygon points="854.8,419.3 967.1,604.0 970.1,607.9 857.8,423.2" fill="#A89068" stroke="#A89068" stroke-width="0.5"/><polygon points="967.1,604.0 1082.8,398.3 1085.8,402.2 970.1,607.9" fill="#A89068" stroke="#A89068" stroke-width="0.5"/><polygon points="1082.8,398.3 1090.6,409.5 1093.6,413.4 1085.8,402.2" fill="#A89068" stroke="#A89068" stroke-width="0.5"/><polyline points="561.3,830.6 676.4,607.1 768.4,660.0 856.3,421.2 968.6,606.0 1084.3,400.2 1092.1,411.4" fill="none" stroke="#A89068" stroke-width="2.0" stroke-linejoin="round"/><polygon points="558.5,829 564.5,826 564.5,1043.5 558,1041" fill="#6C5C3E" stroke="#000" stroke-width="1"/><rect x="1090" y="411" width="3" height="329" fill="#000"/><rect x="1091" y="411" width="1" height="329" fill="#B8A070"/>
<g stroke="#111" stroke-width="1.05"><line x1="581.2" y1="10.4" x2="630.8" y2="39.0"/><line x1="644.0" y1="46.6" x2="656.7" y2="54.0"/><line x1="670.2" y1="61.8" x2="719.8" y2="90.4"/><line x1="733.0" y1="98.0" x2="745.7" y2="105.3"/><line x1="759.2" y1="113.1" x2="808.8" y2="141.7"/><line x1="822.0" y1="149.3" x2="834.7" y2="156.7"/><line x1="848.2" y1="164.5" x2="897.8" y2="193.1"/><line x1="911.0" y1="200.7" x2="923.7" y2="208.0"/><line x1="937.2" y1="215.8" x2="986.8" y2="244.4"/><line x1="1000.0" y1="252.0" x2="1012.7" y2="259.4"/><line x1="1026.2" y1="267.2" x2="1075.8" y2="295.8"/><line x1="1089.0" y1="303.4" x2="1101.7" y2="310.7"/><line x1="1115.2" y1="318.5" x2="1164.8" y2="347.1"/><line x1="1178.0" y1="354.8" x2="1190.7" y2="362.1"/><line x1="1204.2" y1="369.9" x2="1219.0" y2="378.4"/><line x1="822.8" y1="3.0" x2="833.6" y2="9.2"/><line x1="847.1" y1="17.0" x2="896.7" y2="45.6"/><line x1="909.9" y1="53.3" x2="922.6" y2="60.6"/><line x1="936.1" y1="68.4" x2="985.7" y2="97.0"/><line x1="998.9" y1="104.6" x2="1011.6" y2="111.9"/><line x1="1025.1" y1="119.7" x2="1074.7" y2="148.3"/><line x1="1087.9" y1="156.0" x2="1100.6" y2="163.3"/><line x1="1114.1" y1="171.1" x2="1163.7" y2="199.7"/><line x1="1176.9" y1="207.3" x2="1189.6" y2="214.6"/><line x1="1203.1" y1="222.4" x2="1219.0" y2="231.6"/></g>
<!-- view cube -->
<g>
<ellipse cx="1133" cy="114" rx="64" ry="44" fill="#F3F3F3" stroke="#CFCFCF" stroke-width="1" stroke-dasharray="2,1.5"/>
<ellipse cx="1133" cy="114" rx="50" ry="32" fill="#FFFFFF" stroke="#D6D6D6" stroke-width="1" stroke-dasharray="2,1.5"/>
<ellipse cx="1134" cy="117" rx="40" ry="22" fill="url(#shad)"/>
<polygon points="1133,52.3 1167.8,68.8 1132.4,87.3 1098.7,68.8" fill="#F1F1F1" stroke="#8E8E8E" stroke-width="0.8"/>
<polygon points="1098.7,68.8 1132.4,87.3 1132.4,128.4 1100.5,107.5" fill="#E9E9E9" stroke="#8E8E8E" stroke-width="0.8"/>
<polygon points="1132.4,87.3 1167.8,68.8 1165.8,106.9 1132.4,128.4" fill="#EDEDED" stroke="#8E8E8E" stroke-width="0.8"/>
<g font-weight="bold" fill="#8E8E8E" stroke="#C8C8C8" stroke-width="0.25">
<text x="0" y="0" font-size="9.5" transform="matrix(0.88,0.48,-0.62,0.55,1120.5,64)">TOP</text>
<text x="0" y="0" font-size="10" transform="matrix(0.877,0.482,0,1.05,1103.5,94.5)">FRONT</text>
<text x="0" y="0" font-size="10" transform="matrix(0.887,-0.464,0,1.05,1139.5,107)">RIGHT</text>
</g>
<g font-weight="bold" fill="#EBEBEB" stroke="#C2C2C2" stroke-width="0.8" font-size="19">
<text x="0" y="0" transform="matrix(0.75,-0.45,0.45,0.5,1077,149)">S</text>
<text x="0" y="0" transform="matrix(0.75,0.45,-0.3,0.5,1169,135)">E</text>
<text x="0" y="0" font-size="17" transform="matrix(0.45,-0.6,0.6,0.45,1086,95)">W</text>
<text x="0" y="0" font-size="17" transform="matrix(0.45,0.6,-0.6,0.45,1170,81)">N</text>
</g>
</g>
<!-- nav bar -->
<g>
<rect x="1188" y="171" width="34" height="117" rx="5" ry="5" fill="#F3F3F3" stroke="#B9B9B9" stroke-width="1.6"/>
<circle cx="1215" cy="177" r="3.3" fill="#D0D0D0" stroke="#BDBDBD" stroke-width="0.6"/>
<path d="M1213.3,175.3 L1216.7,178.7 M1216.7,175.3 L1213.3,178.7" stroke="#fff" stroke-width="0.9"/>
<circle cx="1215" cy="280" r="3.3" fill="#D0D0D0" stroke="#BDBDBD" stroke-width="0.6"/>
<line x1="1212.8" y1="280" x2="1217.2" y2="280" stroke="#fff" stroke-width="1"/>
<path d="M1200,191 h7 a5,5 0 0 1 5,5 v6 a5,5 0 0 1 -5,5 h-4 a7.5,7.5 0 0 1 -3,-16z" fill="#EFEFEF" stroke="#B5B5B5" stroke-width="1"/>
<circle cx="1202.5" cy="200" r="4" fill="#E5E5E5" stroke="#A8A8A8" stroke-width="0.9"/>
<polygon points="1206.5,206.5 1209.8,203.1 1216.4,203.1 1216.4,210.2 1213.3,213.7 1206.5,213.7" fill="#A9C8EC" stroke="#86A8D4" stroke-width="0.8"/>
<polygon points="1206.5,206.5 1209.8,203.1 1216.4,203.1 1213.3,206.5" fill="#D6E6F8"/>
<polygon points="1213.3,206.5 1216.4,203.1 1216.4,210.2 1213.3,213.7" fill="#93B5DF"/>
<path d="M1196.5,206 L1199.3,203.3" stroke="#A8A8A8" stroke-width="0.9"/>
<polygon points="1201.5,221.5 1206.5,221.5 1204,224.5" fill="#8A8A8A"/>
<line x1="1192" y1="228.5" x2="1218" y2="228.5" stroke="#C4C4C4" stroke-width="1"/>
<rect x="1197" y="237.5" width="10" height="9.5" fill="#B9D3A4" stroke="#8BAF70" stroke-width="0.7"/>
<circle cx="1207.5" cy="247.5" r="3.2" fill="#F4F4F4" stroke="#8F8F8F" stroke-width="1"/>
<line x1="1209.8" y1="249.8" x2="1212.5" y2="252.5" stroke="#8F8F8F" stroke-width="1.3"/>
<polygon points="1201.5,263 1207.5,263 1204.5,266.5" fill="#8A8A8A"/>
</g>
<clipPath id="navclip"><rect x="1186" y="168" width="34" height="122"/></clipPath><g clip-path="url(#navclip)"><g stroke="#111" stroke-width="1.05"><line x1="581.2" y1="10.4" x2="630.8" y2="39.0"/><line x1="644.0" y1="46.6" x2="656.7" y2="54.0"/><line x1="670.2" y1="61.8" x2="719.8" y2="90.4"/><line x1="733.0" y1="98.0" x2="745.7" y2="105.3"/><line x1="759.2" y1="113.1" x2="808.8" y2="141.7"/><line x1="822.0" y1="149.3" x2="834.7" y2="156.7"/><line x1="848.2" y1="164.5" x2="897.8" y2="193.1"/><line x1="911.0" y1="200.7" x2="923.7" y2="208.0"/><line x1="937.2" y1="215.8" x2="986.8" y2="244.4"/><line x1="1000.0" y1="252.0" x2="1012.7" y2="259.4"/><line x1="1026.2" y1="267.2" x2="1075.8" y2="295.8"/><line x1="1089.0" y1="303.4" x2="1101.7" y2="310.7"/><line x1="1115.2" y1="318.5" x2="1164.8" y2="347.1"/><line x1="1178.0" y1="354.8" x2="1190.7" y2="362.1"/><line x1="1204.2" y1="369.9" x2="1219.0" y2="378.4"/><line x1="822.8" y1="3.0" x2="833.6" y2="9.2"/><line x1="847.1" y1="17.0" x2="896.7" y2="45.6"/><line x1="909.9" y1="53.3" x2="922.6" y2="60.6"/><line x1="936.1" y1="68.4" x2="985.7" y2="97.0"/><line x1="998.9" y1="104.6" x2="1011.6" y2="111.9"/><line x1="1025.1" y1="119.7" x2="1074.7" y2="148.3"/><line x1="1087.9" y1="156.0" x2="1100.6" y2="163.3"/><line x1="1114.1" y1="171.1" x2="1163.7" y2="199.7"/><line x1="1176.9" y1="207.3" x2="1189.6" y2="214.6"/><line x1="1203.1" y1="222.4" x2="1219.0" y2="231.6"/></g></g>
<!-- cursor -->
<path d="M15.6,229.3 L15.6,245.3 L16.3,245.7 L19.5,242.3 L21.8,247 L23.5,247.4 L24.6,246.1 L22.6,241.7 L26.5,241.2 L26.7,240.4 Z" fill="#fff" stroke="#111" stroke-width="1.1" stroke-linejoin="round"/>
</svg>
<div id="cyt"></div>
<div id="cyr"></div>
<div id="lbl"><span>rary Hide/Isolate</span></div>
<div id="strip"><svg class="up" viewBox="0 0 11 8"><path d="M0.8,7.2 L5,2.2 L9.2,7.2" fill="none" stroke="#444" stroke-width="2.1"/></svg></div>
<div id="thumb"></div>
<div id="sep"></div>
<div id="panel"></div>
<div style="position:absolute;left:1251px;top:0;width:1px;height:85px;background:#D0D0D0"></div><div id="tbox"></div>
<svg style="position:absolute;left:1256px;top:0" width="80" height="82" viewBox="1256 0 80 82">
<polygon points="1267.8,8.5 1281.9,1.1 1324.4,24.4 1309.7,32.3" fill="#7A7A7A"/>
<polygon points="1267.8,8.5 1309.7,32.3 1309.7,81 1267.8,57.2" fill="#838383"/>
<polygon points="1309.7,32.3 1324.4,24.4 1324.4,72.5 1309.7,81" fill="#474747"/>
<polyline points="1267.8,8.5 1309.7,32.3 1324.4,24.4" fill="none" stroke="#3a3a3a" stroke-width="0.8"/>
</svg>
<div id="redbox"></div>
<div class="tt" style="top:23px">System Panel</div>
<div class="tt" style="top:42px;letter-spacing:-0.24px">Owens Corning R-13 Pink EcoTouch Kraft Faced Fiberglass Insulation</div>
<div id="dd"></div>
<div id="cpbar"><span>Curtain Panels (1)</span>
<svg style="position:absolute;left:561px;top:10px" width="10" height="7" viewBox="0 0 10 7"><path d="M0.5,1 L5,5.5 L9.5,1" fill="none" stroke="#9a9a9a" stroke-width="1"/></svg></div>
<svg style="position:absolute;left:1832px;top:88px" width="18" height="18" viewBox="0 0 18 18">
<g fill="none" stroke="#8C8C8C" stroke-width="1">
<path d="M8,1.5 H3 Q1.7,1.5 1.7,2.8 V8 H8 M8,3 V6"/>
<path d="M7.5,9.5 H1.7 V15.5 H7.5 M7.5,13.5 V15.5 M7.5,9.5 V11"/>
<path d="M10.5,1.5 H15.5 V5.5"/>
<rect x="9.6" y="7.9" width="6.7" height="8.4"/>
<path d="M11,13.5 H14.5 M13.5,12.5 L14.5,13.5 L13.5,14.5"/>
</g>
<rect x="11" y="9.3" width="3.8" height="1.3" fill="#8C8C8C"/>
</svg>
<div id="edit">Edit Type</div>
<div class="hdr" style="top:114px"><span class="ht">Constraints</span><svg class="chev" viewBox="0 0 6 9" width="6" height="9"><path d="M0.6,3.8 L3,1.3 L5.4,3.8 M0.6,8 L3,5.5 L5.4,8" fill="none" stroke="#000" stroke-width="1.3"/></svg></div>
<div class="row" style="top:138px"><span class="nt">Offset</span><span class="vt">0&#x27;  0&quot;</span><div class="blk"></div></div>
<div class="hdr" style="top:162px"><span class="ht">Construction</span><svg class="chev" viewBox="0 0 6 9" width="6" height="9"><path d="M0.6,3.8 L3,1.3 L5.4,3.8 M0.6,8 L3,5.5 L5.4,8" fill="none" stroke="#000" stroke-width="1.3"/></svg></div>
<div class="row" style="top:186px"><span class="nt">Construction Type</span><div class="blk"></div></div>
<div class="hdr" style="top:210px"><span class="ht">Materials and Finishes</span><svg class="chev" viewBox="0 0 6 9" width="6" height="9"><path d="M0.6,1 L3,3.5 L5.4,1 M0.6,5.2 L3,7.7 L5.4,5.2" fill="none" stroke="#000" stroke-width="1.3"/></svg></div>
<div class="hdr" style="top:234px"><span class="ht">Dimensions</span><svg class="chev" viewBox="0 0 6 9" width="6" height="9"><path d="M0.6,3.8 L3,1.3 L5.4,3.8 M0.6,8 L3,5.5 L5.4,8" fill="none" stroke="#000" stroke-width="1.3"/></svg></div>
<div class="row" style="top:258px"><span class="nt">Thickness</span><span class="vt">0&#x27;  3 1/2&quot;</span><div class="blk"></div></div>
<div class="hdr" style="top:282px"><span class="ht">Analytical Properties</span><svg class="chev" viewBox="0 0 6 9" width="6" height="9"><path d="M0.6,3.8 L3,1.3 L5.4,3.8 M0.6,8 L3,5.5 L5.4,8" fill="none" stroke="#000" stroke-width="1.3"/></svg></div>
<div class="row" style="top:306px"><span class="nt">Analytic Construction</span><span class="vt">&lt;None&gt;</span></div>
<div class="row" style="top:330px"><span class="nt">Define Thermal Properties by</span><span class="vt">Schematic Type</span></div>
<div class="row" style="top:354px"><span class="gt">Visual Light Transmittance</span></div>
<div class="row" style="top:378px"><span class="gt">Solar Heat Gain Coefficient</span></div>
<div class="row" style="top:402px"><span class="gt">Thermal Resistance (R)</span></div>
<div class="row" style="top:426px"><span class="gt">Heat Transfer Coefficient (U)</span></div>
<div class="hdr" style="top:450px"><span class="ht">Identity Data</span><svg class="chev" viewBox="0 0 6 9" width="6" height="9"><path d="M0.6,3.8 L3,1.3 L5.4,3.8 M0.6,8 L3,5.5 L5.4,8" fill="none" stroke="#000" stroke-width="1.3"/></svg></div>
<div class="row" style="top:474px"><span class="nt">Keynote</span><div class="blk"></div></div>
<div class="row" style="top:498px"><span class="nt">Model</span><div class="blk"></div></div>
<div class="row" style="top:522px"><span class="nt">Manufacturer</span><div class="blk"></div></div>
<div class="row" style="top:546px"><span class="nt">Type Comments</span><div class="blk"></div></div>
<div class="row" style="top:570px"><span class="gt">Type Image</span></div>
<div class="row" style="top:594px"><span class="nt">URL</span><div class="blk"></div></div>
<div class="row" style="top:618px"><span class="nt">Description</span><div class="blk"></div></div>
<div class="row" style="top:642px"><span class="nt">Assembly Code</span><div class="blk"></div></div>
<div class="row" style="top:666px"><span class="nt">Cost</span><div class="blk"></div></div>
<div class="row" style="top:690px"><span class="gt">Assembly Description</span></div>
<div class="row" style="top:714px"><span class="nt">Type Mark</span></div>
<div class="row" style="top:738px"><span class="gt">OmniClass Number</span></div>
<div class="row" style="top:762px"><span class="gt">OmniClass Title</span></div>
<div class="row" style="top:786px"><span class="gt">Code Name</span></div>
</body></html>
